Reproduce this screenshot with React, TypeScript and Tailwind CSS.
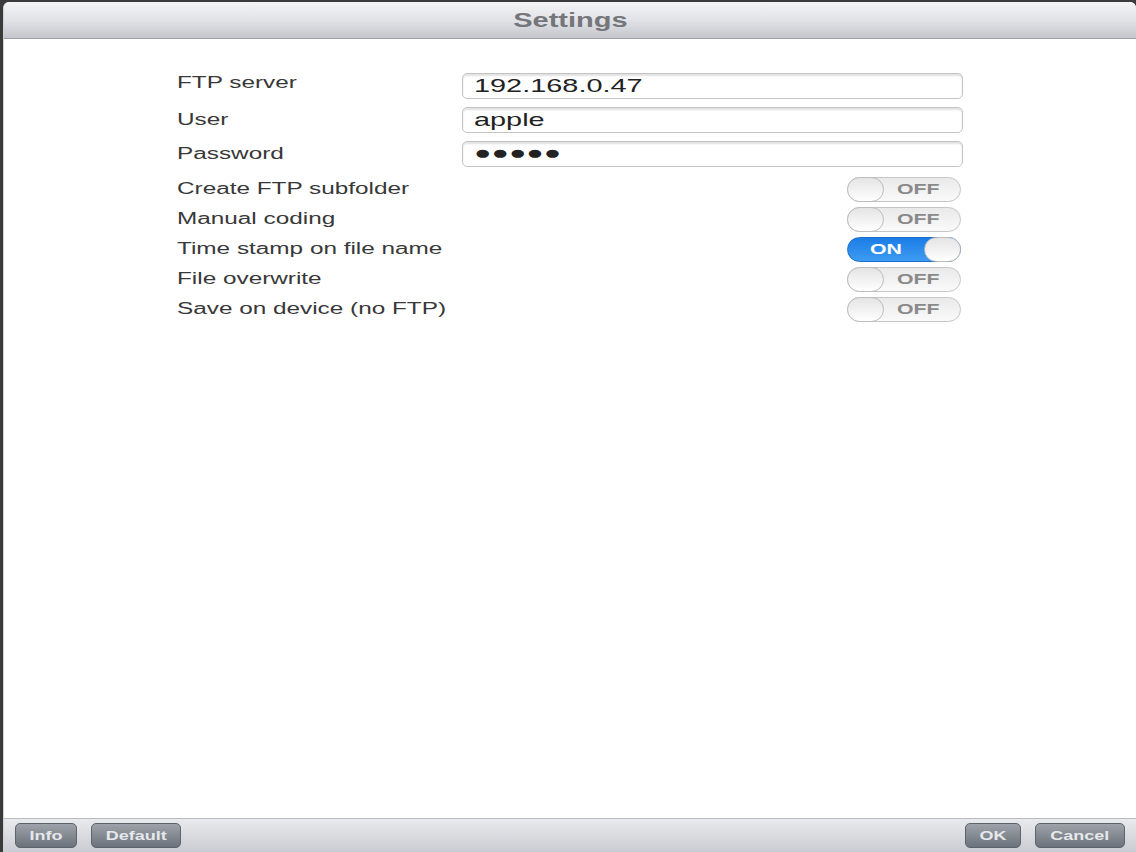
import React from "react";

const fields = [
  { label: "FTP server", value: "192.168.0.47", h: "h-[34px]", first: true },
  { label: "User", value: "apple", h: "h-[34px]", first: false },
  { label: "Password", value: "●●●●●", h: "h-[33px]", first: false },
];

const toggles = [
  { label: "Create FTP subfolder", on: false },
  { label: "Manual coding", on: false },
  { label: "Time stamp on file name", on: true },
  { label: "File overwrite", on: false },
  { label: "Save on device (no FTP)", on: false },
];

// the source screen is stretched sideways, so text gets a horizontal scale
const Wide = ({ children, className = "" }: { children: React.ReactNode; className?: string }) => (
  <span className={`inline-block origin-left scale-x-[1.52] whitespace-nowrap ${className}`}>{children}</span>
);

const Toggle = ({ on }: { on: boolean }) =>
  on ? (
    <div className="relative w-[114px] h-[25px] rounded-full bg-gradient-to-b from-[#1a7de6] to-[#3d9bf2] border border-[#1d6fc9] flex items-center">
      <Wide className="ml-[22px] text-[14px] font-bold text-white">ON</Wide>
      <div className="absolute right-[-1px] top-[-1px] w-[37px] h-[25px] rounded-full bg-gradient-to-b from-[#e4e4e4] to-white border border-[#bdbdbd]" />
    </div>
  ) : (
    <div className="relative w-[114px] h-[25px] rounded-full bg-gradient-to-b from-[#e9e9e9] to-[#fafafa] border border-[#c6c6c6] flex items-center">
      <Wide className="ml-[49px] text-[14px] font-bold text-[#8a8a8a]">OFF</Wide>
      <div className="absolute left-[-1px] top-[-1px] w-[37px] h-[25px] rounded-full bg-gradient-to-b from-[#e4e4e4] to-white border border-[#bdbdbd]" />
    </div>
  );

const BarButton = ({ label, w }: { label: string; w: string }) => (
  <div
    className={`${w} h-[25px] rounded-[5px] bg-gradient-to-b from-[#9ea3ab] to-[#6c727b] border border-[#5d636b] flex items-center justify-center text-[12px] font-bold text-[#e6e8eb]`}
  >
    <span className="inline-block scale-x-[1.5]">{label}</span>
  </div>
);

export default function App() {
  return (
    <div
      className="w-[1136px] h-[852px] bg-[#3a3a3a] flex flex-col overflow-hidden"
      style={{ fontFamily: '"Liberation Sans", Arial, sans-serif' }}
    >
      <div className="flex-1 flex flex-col mt-[2px] ml-[3px] rounded-t-[6px] overflow-hidden bg-white border-l border-[#d0d0d0]">
        <div className="h-[37px] shrink-0 bg-gradient-to-b from-[#f4f4f6] via-[#e2e3e7] to-[#c3c6cc] border-b border-[#9a9ea6] flex items-center justify-center">
          <span className="inline-block scale-x-[1.45] text-[20px] font-bold text-[#74767a]">Settings</span>
        </div>
        <div className="flex-1 flex flex-col pl-[173px] pr-[173px] text-[#383838] text-[16px]">
          {fields.map((f) => (
            <div key={f.label} className={`flex items-center ${f.h} ${f.first ? "mt-[30px]" : ""}`}>
              <div className={`w-[286px] ${f.first ? "-mt-[7px]" : ""}`}>
                <Wide>{f.label}</Wide>
              </div>
              <div className="w-[502px] h-[26px] rounded-[5px] border border-[#c4c4c4] bg-white shadow-[inset_0_2px_2px_rgba(0,0,0,0.12)] flex items-center px-[11px] text-[19px] text-[#222] overflow-hidden">
                <Wide>{f.value}</Wide>
              </div>
            </div>
          ))}
          <div className="h-[4px]" />
          {toggles.map((t) => (
            <div key={t.label} className="flex items-center justify-between h-[30px] pr-[2px]">
              <Wide>{t.label}</Wide>
              <Toggle on={t.on} />
            </div>
          ))}
        </div>
        <div className="h-[34px] shrink-0 border-t border-[#b9bcc2] bg-gradient-to-b from-[#e9eaed] to-[#c9ccd2] flex items-center px-[11px] gap-[14px]">
          <BarButton label="Info" w="w-[62px]" />
          <BarButton label="Default" w="w-[90px]" />
          <div className="flex-1" />
          <BarButton label="OK" w="w-[56px]" />
          <BarButton label="Cancel" w="w-[90px]" />
        </div>
      </div>
    </div>
  );
}
